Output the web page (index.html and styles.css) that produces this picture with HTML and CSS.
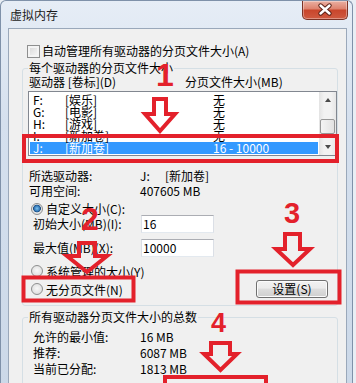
FILE: index.html
```html
<!DOCTYPE html>
<html>
  <head>
  <meta charset="utf-8">
  <link rel="stylesheet" href="styles.css">
  </head>
  <body>

    <div class="window">
      <div class="titlebar">
        <span class="title">虚拟内存</span>
        <div class="close-btn">
          <svg width="46" height="18" viewBox="0 0 46 18">
            <path d="M18.5 4.5 L27.5 12.5 M27.5 4.5 L18.5 12.5" stroke="#5b2217" stroke-width="4.4" stroke-linecap="round" />
            <path d="M18.5 4.5 L27.5 12.5 M27.5 4.5 L18.5 12.5" stroke="#ffffff" stroke-width="2.4" stroke-linecap="round" />
          </svg>
        </div>
      </div>

      <div class="client">
        <div class="check-row"><span class="checkbox"></span>自动管理所有驱动器的分页文件大小(A)</div>

        <fieldset class="group group-drives">
          <legend>每个驱动器的分页文件大小</legend>
          <div class="list-header"><span>驱动器 [卷标](D)</span><span>分页文件大小(MB)</span></div>

          <div class="listbox">
            <div class="list-rows">
              <div class="list-row"><span>F:</span><span>[娱乐]</span><span>无</span></div>
              <div class="list-row"><span>G:</span><span>[电影]</span><span>无</span></div>
              <div class="list-row"><span>H:</span><span>[游戏]</span><span>无</span></div>
              <div class="list-row"><span>I:</span><span>[新加卷]</span><span>无</span></div>
              <div class="list-row selected"><span>J:</span><span>[新加卷]</span><span>16 - 10000</span></div>
            </div>
            <div class="scrollbar">
              <div class="sb-btn"><span class="tri tri-up"></span></div>
              <div class="sb-track"><div class="sb-thumb"></div></div>
              <div class="sb-btn"><span class="tri tri-down"></span></div>
            </div>
          </div>

          <div class="info">
            <span>所选驱动器:</span><span><span class="drive">J:</span>[新加卷]</span>
            <span>可用空间:</span><span>407605 MB</span>
          </div>

          <div class="radio-row radio-custom"><span class="radio checked"></span>自定义大小(C):</div>
          <div class="field-row"><span class="field-label">初始大小(MB)(I):</span><span class="textbox">16</span></div>
          <div class="field-row field-max"><span class="field-label">最大值(MB)(X):</span><span class="textbox">10000</span></div>
          <div class="radio-row radio-system"><span class="radio"></span>系统管理的大小(Y)</div>
          <div class="last-row">
            <div class="radio-row"><span class="radio"></span>无分页文件(N)</div>
            <div class="button">设置(S)</div>
          </div>
        </fieldset>

        <fieldset class="group group-total">
          <legend>所有驱动器分页文件大小的总数</legend>
          <div class="totals">
            <span>允许的最小值:</span><span>16 MB</span>
            <span>推荐:</span><span>6087 MB</span>
            <span>当前已分配:</span><span>1813 MB</span>
          </div>
        </fieldset>
      </div>
    </div>

    <!-- red step markers drawn over the dialog -->
    <svg class="marks" width="356" height="383" viewBox="0 0 356 383">
      <rect x="24" y="136" width="313" height="25" />
      <rect x="23.5" y="277.5" width="110" height="23" stroke-width="5" />
      <rect x="237.5" y="271.5" width="102" height="31" stroke-width="5" />
      <rect x="165" y="377" width="101" height="20" />

      <polygon points="154,99 166,99 166,114 175,114 160,131 145,114 154,114" />
      <polygon points="79,243 95,243 95,256 107,256 87,272 67,256 79,256" />
      <polygon points="285,234 300,234 300,249 310,249 293,265 276,249 285,249" />
      <polygon points="211,343 230,343 230,354 237,354 220.5,370 204,354 211,354" />

      <text x="156" y="86" font-size="32">1</text>
      <text x="81" y="230" font-size="32">2</text>
      <text x="284" y="223" font-size="29">3</text>
      <text x="211" y="332" font-size="27">4</text>
    </svg>

  </body>
</html>
```

FILE: styles.css
```css
html, body {
  height: 100%;
}
body {
  --red: #e3212b;
  --face: #f0f0f0;
  --group-line: #d5dfe5;

  position: relative;
  margin: 0;
  overflow: hidden;
  background-color: #e9eef4;
  color: #000;
  font-family: "Noto Sans CJK SC", sans-serif;
  font-size: 12px;
  line-height: 12px;
}

/* window frame */
.window {
  width: 351px;
  height: 400px;
  border: 1px solid #7f91a9;
  border-bottom: none;
  border-radius: 6px 6px 0 0;
  background: linear-gradient(to bottom, #e6edf6, #d5e0ee 30%, #cbd8e8);
  display: flex;
  flex-direction: column;
}

.titlebar {
  height: 27px;
  display: flex;
  align-items: center;
  padding-left: 9px;
}
.title {
  color: #1b1b1b;
}
.close-btn {
  align-self: flex-start;
  margin-left: auto;
  margin-right: 4px;
  width: 44px;
  height: 18px;
  border: 1px solid #7c3326;
  border-top: none;
  border-radius: 0 0 5px 5px;
  background: linear-gradient(to bottom, #eab0a2 0%, #de8470 42%, #c9462c 52%, #cf5a41 100%);
  box-shadow: inset 0 0 0 1px rgba(255,255,255,0.35);
}
.close-btn svg {
  display: block;
  margin-left: -1px;
}

.client {
  flex: 1;
  box-sizing: border-box;
  width: 339px;
  margin: 0 5px 0 7px;
  border: 1px solid #9aa8ba;
  border-bottom: none;
  background-color: var(--face);
}

.check-row {
  display: flex;
  align-items: center;
  gap: 2px;
  height: 14px;
  margin-top: 15px;
  padding-left: 18px;
}
.checkbox {
  width: 11px;
  height: 11px;
  border: 1px solid #8e8f8f;
  background: linear-gradient(135deg, #d6d6d6, #fafafa);
  box-shadow: inset 0 0 0 2px #f4f4f4;
}

/* group boxes */
.group {
  min-width: 0;
  margin: 3px 8px 0 13px;
  padding: 1px 0 7px 6px;
  border: 1px solid var(--group-line);
  border-radius: 3px;
}
.group legend {
  margin-left: -1px;
  padding: 0 1px;
  line-height: 14px;
}
.group-total {
  margin-top: 4px;
  padding: 5px 0 10px 6px;
}

.list-header {
  display: grid;
  grid-template-columns: 156px auto;
  height: 12px;
}

.listbox {
  box-sizing: border-box;
  height: 65px;
  margin: 3px 0 0 -1px;
  border: 1px solid #828790;
  background-color: #fff;
  display: flex;
}
.list-rows {
  flex: 1;
  padding: 2px 1px 0;
  overflow: hidden;
}
.list-row {
  display: grid;
  grid-template-columns: 32px 148px auto;
  height: 12px;
  padding-left: 3px;
  white-space: nowrap;
}
.list-row.selected {
  background-color: #3399ff;
  color: #fff;
}

.scrollbar {
  width: 17px;
  display: flex;
  flex-direction: column;
  background: linear-gradient(to right, #e3e3e3, #f2f2f2 30%, #f2f2f2 70%, #e6e6e6);
}
.sb-btn {
  height: 16px;
  display: flex;
  align-items: center;
  justify-content: center;
}
.sb-track {
  flex: 1;
}
.sb-thumb {
  box-sizing: border-box;
  height: 15px;
  margin: 11px 1px 0 1px;
  border: 1px solid #979797;
  border-radius: 2px;
  background: linear-gradient(to right, #f4f4f4, #e2e2e2);
}
.tri {
  width: 0;
  height: 0;
  border-left: 3.5px solid transparent;
  border-right: 3.5px solid transparent;
}
.tri-up {
  border-bottom: 4px solid #4a4a4a;
}
.tri-down {
  border-top: 4px solid #4a4a4a;
}

.info {
  display: grid;
  grid-template-columns: 111px auto;
  grid-auto-rows: 15px;
  line-height: 15px;
  margin-top: 12px;
}
.drive {
  display: inline-block;
  width: 25px;
}

/* radios and fields */
.radio-row {
  display: flex;
  align-items: center;
  gap: 3px;
  height: 13px;
  padding-left: 2px;
  line-height: 13px;
}
.radio {
  box-sizing: border-box;
  width: 12px;
  height: 12px;
  border: 1px solid #8e8f8f;
  border-radius: 50%;
  background: radial-gradient(circle at 50% 45%, #f8f8f8 0%, #e4e4e4 60%, #d2d2d2 100%);
}
.radio.checked {
  background: radial-gradient(circle at 50% 45%, #7fc3f0 0%, #2f74b4 38%, #1b4a7c 48%, #e9e9e9 56%, #d6d6d6 100%);
}
.radio-custom {
  margin-top: 4px;
}
.radio-system {
  height: 14px;
  margin-top: 7px;
}

.field-row {
  display: flex;
  align-items: center;
  height: 18px;
  padding-left: 4px;
}
.field-max {
  margin-top: 6px;
}
.field-label {
  width: 108px;
}
.textbox {
  box-sizing: border-box;
  width: 73px;
  height: 18px;
  padding-left: 1px;
  border: 1px solid #dbdfe6;
  border-top-color: #abadb3;
  border-bottom-color: #e3e9ef;
  background-color: #fff;
  line-height: 16px;
}

.last-row {
  display: flex;
  align-items: center;
  height: 18px;
  margin-top: 2px;
}
.last-row .radio-row {
  height: 14px;
}
.button {
  box-sizing: border-box;
  width: 72px;
  height: 18px;
  margin-left: auto;
  margin-right: 9px;
  border: 1px solid #707070;
  border-radius: 3px;
  background: linear-gradient(to bottom, #f2f2f2 0%, #ebebeb 45%, #dddddd 50%, #cfcfcf 100%);
  box-shadow: inset 0 0 0 1px #fbfbfb;
  text-align: center;
  line-height: 16px;
}

.totals {
  display: grid;
  grid-template-columns: 107px auto;
  grid-auto-rows: 16px;
  line-height: 16px;
  padding-left: 4px;
}

/* red annotation layer */
.marks {
  position: absolute;
  top: 0;
  left: 0;
  pointer-events: none;
}
.marks rect,
.marks polygon {
  fill: none;
  stroke: var(--red);
  stroke-width: 4;
}
.marks text {
  fill: var(--red);
  font-family: "Liberation Sans", Arial, sans-serif;
  font-weight: bold;
}
```
